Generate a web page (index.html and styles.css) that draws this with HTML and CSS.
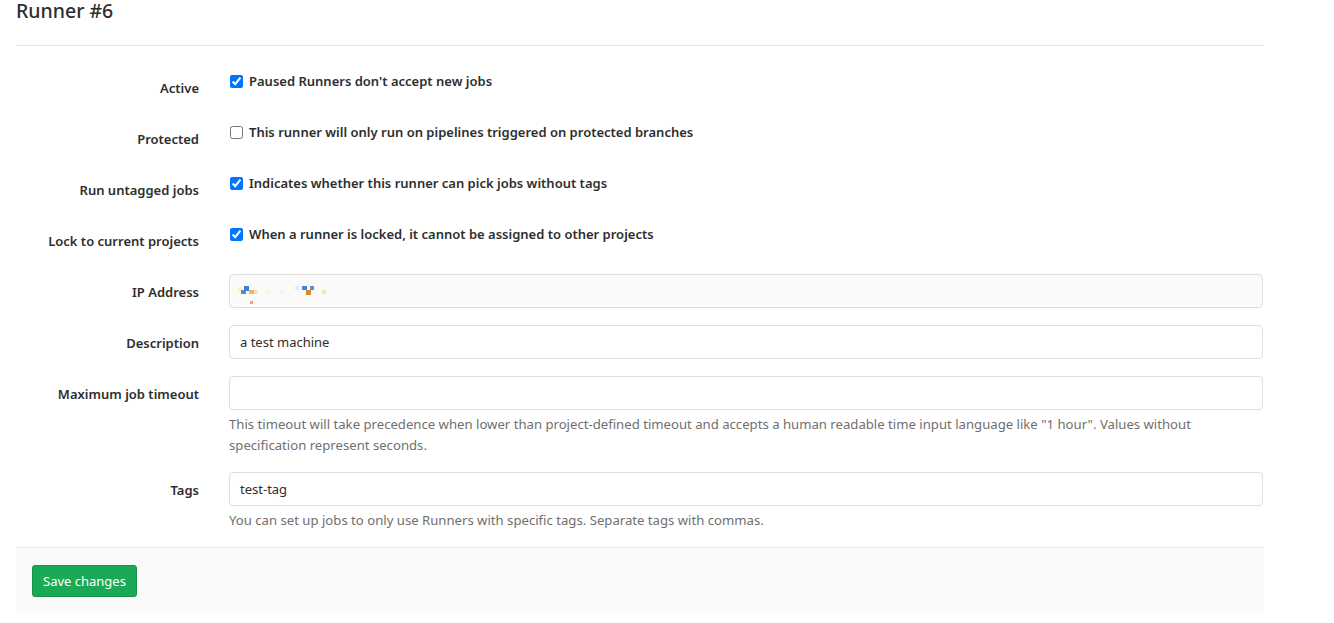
FILE: index.html
```html
<!DOCTYPE html>
<html>
<head>
<meta charset="utf-8">
<link rel="stylesheet" href="styles.css">
</head>
<body>
<div class="page">
  <h3 class="title">Runner #6</h3>
  <form class="runner-form">
    <div class="form-body">
      <div class="form-group">
        <label class="col-label">Active</label>
        <div class="col-field">
          <label class="check"><input type="checkbox" checked> Paused Runners don't accept new jobs</label>
        </div>
      </div>
      <div class="form-group">
        <label class="col-label">Protected</label>
        <div class="col-field">
          <label class="check"><input type="checkbox"> This runner will only run on pipelines triggered on protected branches</label>
        </div>
      </div>
      <div class="form-group">
        <label class="col-label">Run untagged jobs</label>
        <div class="col-field">
          <label class="check"><input type="checkbox" checked> Indicates whether this runner can pick jobs without tags</label>
        </div>
      </div>
      <div class="form-group">
        <label class="col-label">Lock to current projects</label>
        <div class="col-field">
          <label class="check"><input type="checkbox" checked> When a runner is locked, it cannot be assigned to other projects</label>
        </div>
      </div>
      <div class="form-group">
        <label class="col-label">IP Address</label>
        <div class="col-field">
          <div class="input readonly">
            <svg class="ip-blur" width="110" height="32" viewBox="0 0 110 32">
              <rect x="4" y="11" width="25" height="10" fill="#fbfbf6"/>
              <rect x="8" y="12" width="4" height="4" fill="#fdf0c0"/>
              <rect x="14" y="11" width="5" height="5" fill="#3f7fcf"/>
              <rect x="11" y="15" width="5" height="4" fill="#4b8ad4"/>
              <rect x="19" y="15" width="5" height="4" fill="#f1b070"/>
              <rect x="24" y="15" width="4" height="4" fill="#fbe3bd"/>
              <rect x="20" y="26" width="3" height="3" fill="#f2a262"/>
              <rect x="35" y="15" width="4" height="4" fill="#fcf6dc"/>
              <rect x="50" y="15" width="4" height="4" fill="#f0f8dc"/>
              <rect x="65" y="11" width="4" height="4" fill="#ddeffa"/>
              <rect x="72" y="11" width="5" height="4" fill="#4383d0"/>
              <rect x="76" y="15" width="5" height="5" fill="#d6892e"/>
              <rect x="80" y="11" width="4" height="4" fill="#5a93d4"/>
              <rect x="92" y="15" width="4" height="4" fill="#fae6a6"/>
            </svg>
          </div>
        </div>
      </div>
      <div class="form-group">
        <label class="col-label">Description</label>
        <div class="col-field">
          <div class="input">a test machine</div>
        </div>
      </div>
      <div class="form-group">
        <label class="col-label">Maximum job timeout</label>
        <div class="col-field">
          <div class="input"></div>
          <p class="help">This timeout will take precedence when lower than project-defined timeout and accepts a human readable time input language like "1 hour". Values without specification represent seconds.</p>
        </div>
      </div>
      <div class="form-group">
        <label class="col-label">Tags</label>
        <div class="col-field">
          <div class="input">test-tag</div>
          <p class="help">You can set up jobs to only use Runners with specific tags. Separate tags with commas.</p>
        </div>
      </div>
    </div>
    <div class="form-actions">
      <button type="button" class="btn-save">Save changes</button>
    </div>
  </form>
</div>
</body>
</html>
```

FILE: styles.css
```css
* { box-sizing: border-box; }
html, body { margin: 0; padding: 0; background: #fff; }
body {
  font-family: "Noto Sans", "Open Sans", "Liberation Sans", sans-serif;
  font-size: 13px;
  line-height: 20px;
  color: #2e2e2e;
}
.page {
  width: 1248px;
  margin-left: 16px;
}
.title {
  margin: 0;
  font-size: 19.5px;
  line-height: 22px;
  font-weight: 500;
  height: 46px;
  border-bottom: 1px solid #e5e5e5;
  color: #2e2e2e;
}
.form-body {
  padding-top: 24px;
  padding-bottom: 17px;
  display: flex;
  flex-direction: column;
  gap: 17px;
}
.form-group {
  display: grid;
  grid-template-columns: 183px 1fr;
  column-gap: 30px;
  min-height: 34px;
}
.col-label {
  text-align: right;
  font-weight: 600;
  padding-top: 8px;
  line-height: 20px;
}
.col-field { padding-right: 1px; }
.check {
  display: flex;
  align-items: center;
  gap: 6px;
  font-weight: 600;
  line-height: 20px;
  padding-top: 1px;
}
.check input {
  margin: 0 0 0 1px;
  width: 13px;
  height: 13px;
}
.input {
  height: 34px;
  border: 1px solid #dfdfdf;
  border-radius: 4px;
  padding: 6px 10px;
  line-height: 20px;
  background: #fff;
}
.input.readonly {
  background: #fafafa;
  padding: 0;
  overflow: hidden;
}
.ip-blur { display: block; }
.help {
  margin: 4px 0 -1px 0;
  color: #707070;
  font-size: 13.15px;
  line-height: 21px;
}
.form-actions {
  border-top: 1px solid #e5e5e5;
  background: #fafafa;
  padding: 17px 16px 16px;
}
.btn-save {
  font-family: inherit;
  font-size: 13px;
  line-height: 20px;
  height: 32px;
  padding: 5px 10px;
  color: #fff;
  background: #1aaa55;
  border: 1px solid #168f48;
  border-radius: 3px;
}
```
